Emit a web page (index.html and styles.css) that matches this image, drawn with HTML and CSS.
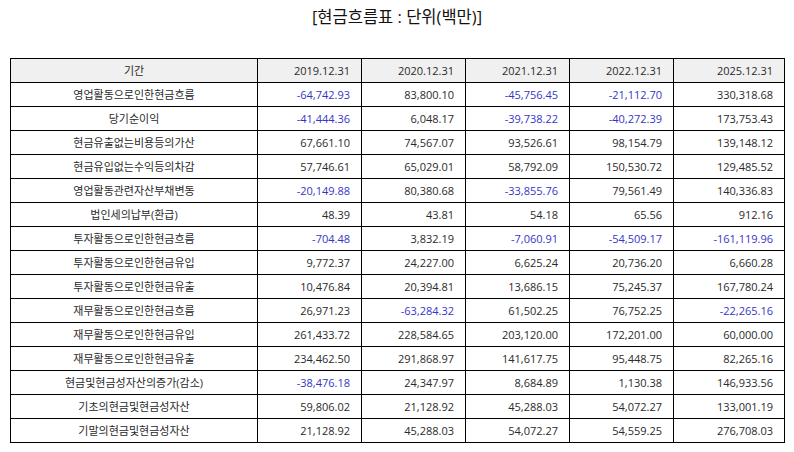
FILE: index.html
```html
<!DOCTYPE html>
<html lang="ko">
<head>
<meta charset="utf-8">
<title>현금흐름표</title>
<link rel="stylesheet" href="styles.css">
</head>
<body>
<div class="title">[현금흐름표 : 단위(백만)]</div>
<table class="cf">
<colgroup>
<col class="c-label"><col class="c-num"><col class="c-num"><col class="c-num"><col class="c-num"><col class="c-last">
</colgroup>
<thead>
<tr><th class="label">기간</th><th>2019.12.31</th><th>2020.12.31</th><th>2021.12.31</th><th>2022.12.31</th><th>2025.12.31</th></tr>
</thead>
<tbody>
<tr><td class="label">영업활동으로인한현금흐름</td><td class="neg">-64,742.93</td><td>83,800.10</td><td class="neg">-45,756.45</td><td class="neg">-21,112.70</td><td>330,318.68</td></tr>
<tr><td class="label">당기순이익</td><td class="neg">-41,444.36</td><td>6,048.17</td><td class="neg">-39,738.22</td><td class="neg">-40,272.39</td><td>173,753.43</td></tr>
<tr><td class="label">현금유출없는비용등의가산</td><td>67,661.10</td><td>74,567.07</td><td>93,526.61</td><td>98,154.79</td><td>139,148.12</td></tr>
<tr><td class="label">현금유입없는수익등의차감</td><td>57,746.61</td><td>65,029.01</td><td>58,792.09</td><td>150,530.72</td><td>129,485.52</td></tr>
<tr><td class="label">영업활동관련자산부채변동</td><td class="neg">-20,149.88</td><td>80,380.68</td><td class="neg">-33,855.76</td><td>79,561.49</td><td>140,336.83</td></tr>
<tr><td class="label">법인세의납부(환급)</td><td>48.39</td><td>43.81</td><td>54.18</td><td>65.56</td><td>912.16</td></tr>
<tr><td class="label">투자활동으로인한현금흐름</td><td class="neg">-704.48</td><td>3,832.19</td><td class="neg">-7,060.91</td><td class="neg">-54,509.17</td><td class="neg">-161,119.96</td></tr>
<tr><td class="label">투자활동으로인한현금유입</td><td>9,772.37</td><td>24,227.00</td><td>6,625.24</td><td>20,736.20</td><td>6,660.28</td></tr>
<tr><td class="label">투자활동으로인한현금유출</td><td>10,476.84</td><td>20,394.81</td><td>13,686.15</td><td>75,245.37</td><td>167,780.24</td></tr>
<tr><td class="label">재무활동으로인한현금흐름</td><td>26,971.23</td><td class="neg">-63,284.32</td><td>61,502.25</td><td>76,752.25</td><td class="neg">-22,265.16</td></tr>
<tr><td class="label">재무활동으로인한현금유입</td><td>261,433.72</td><td>228,584.65</td><td>203,120.00</td><td>172,201.00</td><td>60,000.00</td></tr>
<tr><td class="label">재무활동으로인한현금유출</td><td>234,462.50</td><td>291,868.97</td><td>141,617.75</td><td>95,448.75</td><td>82,265.16</td></tr>
<tr><td class="label">현금및현금성자산의증가(감소)</td><td class="neg">-38,476.18</td><td>24,347.97</td><td>8,684.89</td><td>1,130.38</td><td>146,933.56</td></tr>
<tr><td class="label">기초의현금및현금성자산</td><td>59,806.02</td><td>21,128.92</td><td>45,288.03</td><td>54,072.27</td><td>133,001.19</td></tr>
<tr><td class="label">기말의현금및현금성자산</td><td>21,128.92</td><td>45,288.03</td><td>54,072.27</td><td>54,559.25</td><td>276,708.03</td></tr>
</tbody>
</table>
</body>
</html>
```
FILE: styles.css
```css
html, body {
  margin: 0;
  padding: 0;
  background: #ffffff;
}
body {
  font-family: "Open Sans", "Noto Sans CJK KR", sans-serif;
  color: #222222;
}
.title {
  box-sizing: border-box;
  height: 58px;
  padding-top: 5px;
  font-size: 16.5px;
  line-height: 24px;
  text-align: center;
  color: #111111;
}
.cf {
  margin-left: 10px;
  width: 775px;
  border-collapse: collapse;
  table-layout: fixed;
  font-size: 11px;
}
.c-label { width: 247px; }
.c-num { width: 104px; }
.c-last { width: 111px; }
.cf th, .cf td {
  border: 1px solid #000000;
  height: 23px;
  padding: 0 11px 0 4px;
  line-height: 14px;
  text-align: right;
  font-weight: normal;
  white-space: nowrap;
  color: #2a2a2a;
}
.cf th {
  background: #f0f0f0;
}
.cf .label {
  text-align: center;
  padding: 0 4px;
}
.cf td.neg {
  color: #3535c8;
}
```
